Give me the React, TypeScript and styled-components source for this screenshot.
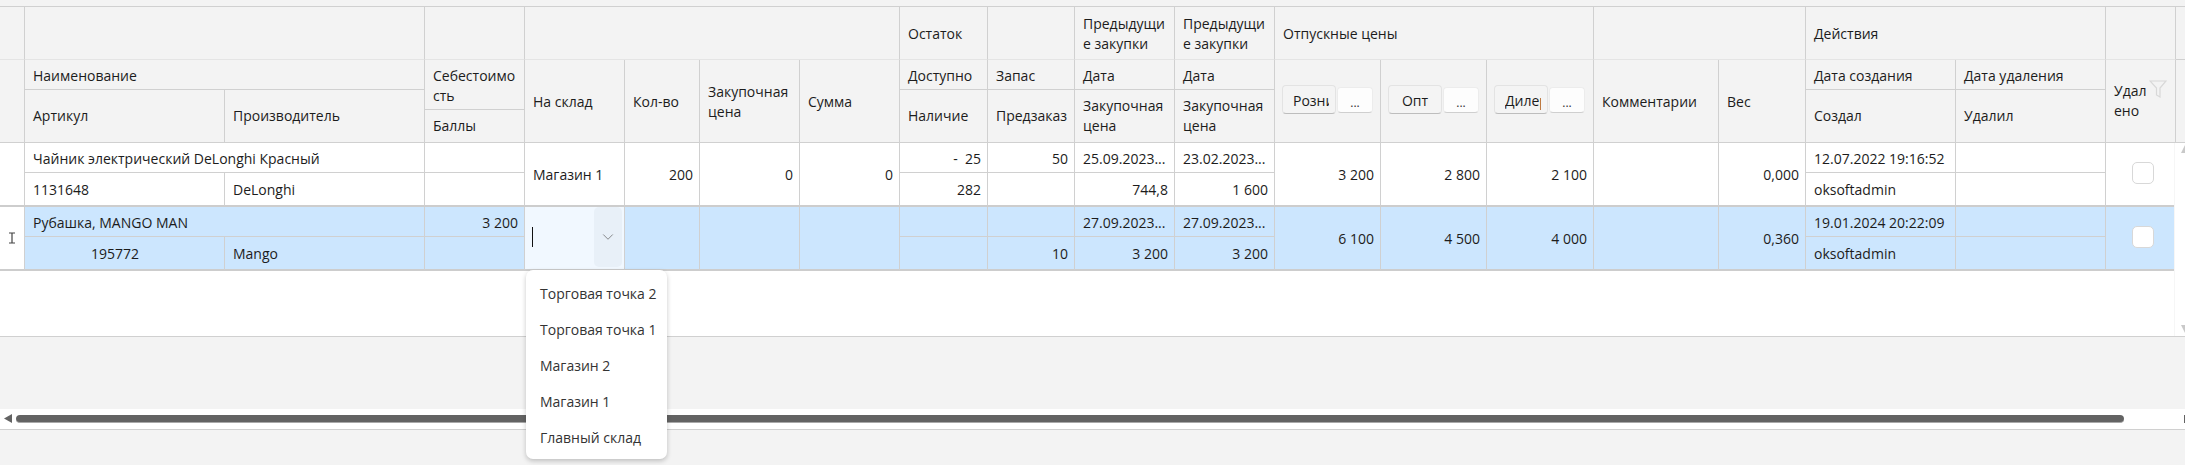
import styled, { createGlobalStyle, css } from 'styled-components'
import { ChevronDown } from 'lucide-react'

const GlobalStyle = createGlobalStyle`
  html, body {
    margin: 0;
    padding: 0;
    background: #f3f3f3;
  }
  * {
    box-sizing: border-box;
  }
`

const LINE = '#d0d0d0'
const TRACKS = '25px 200px 200px 100px 100px 75px 100px 100px 88px 87px 100px 100px 106px 106px 107px 125px 87px 150px 150px'

const Page = styled.div`
  width: 2185px;
  height: 465px;
  overflow: hidden;
  display: flex;
  flex-direction: column;
  background: #f3f3f3;
  font-family: "Open Sans", "Noto Sans", sans-serif;
  font-size: 14px;
  color: #1c1c1c;
`

const TopGap = styled.div`
  height: 7px;
  flex: none;
  border-bottom: 1px solid ${LINE};
`

const HeaderGrid = styled.div`
  flex: none;
  display: grid;
  grid-template-columns: ${TRACKS} 70px 9px;
  grid-template-rows: 53px 30px 20px 33px;
  height: 136px;
  background: #f3f3f3;
`

interface PlaceProps {
  $c: number
  $cs?: number
  $r: number
  $rs?: number
}

const place = css<PlaceProps>`
  grid-column: ${(p) => p.$c} / span ${(p) => p.$cs ?? 1};
  grid-row: ${(p) => p.$r} / span ${(p) => p.$rs ?? 1};
`

const HeadCell = styled.div<PlaceProps & { $soft?: boolean; $open?: boolean }>`
  ${place}
  display: flex;
  align-items: center;
  padding: ${(p) => (p.$r <= 2 ? '2px' : '0')} 7px 0 8px;
  line-height: 20px;
  overflow-wrap: anywhere;
  border-right: ${(p) => (p.$open ? 'none' : `1px solid ${LINE}`)};
  border-bottom: 1px solid ${(p) => (p.$soft ? '#e4e4e4' : LINE)};
`

const DeletedHead = styled(HeadCell)`
  position: relative;
  padding-top: 0;
  padding-right: 24px;
`

const FilterMark = styled.svg`
  position: absolute;
  top: 20px;
  right: 8px;
  width: 18px;
  height: 18px;
`

const PriceHead = styled(HeadCell)`
  align-items: flex-start;
  gap: 1px;
  padding: 25px 0 0 7px;
`

const PriceButton = styled.button`
  width: 54px;
  height: 29px;
  flex: none;
  padding: 3px 6px 0 10px;
  text-align: left;
  font: inherit;
  color: inherit;
  background: #f4f4f4;
  border: 1px solid #e3e3e3;
  border-bottom-color: #bdbdbd;
  border-radius: 4px;
`

const CenteredPriceButton = styled(PriceButton)`
  padding: 3px 0 0;
  text-align: center;
`

const ButtonLabel = styled.span`
  display: block;
  overflow: hidden;
  white-space: nowrap;
`

const DotsButton = styled.button`
  width: 36px;
  height: 26px;
  margin-top: 2px;
  flex: none;
  padding: 6px 0 0;
  font: inherit;
  font-size: 12px;
  line-height: 16px;
  color: #333;
  background: #fdfdfd;
  border: 1px solid #ececec;
  border-bottom-color: #cfcfcf;
  border-radius: 4px;
`

const Body = styled.div`
  flex: none;
  height: 194px;
  display: flex;
  background: #fff;
  border-bottom: 1px solid ${LINE};
`

const Rows = styled.div`
  width: 2174px;
  flex: none;
`

const VScroll = styled.div`
  flex: 1;
  display: flex;
  flex-direction: column;
  justify-content: space-between;
  padding: 2px 0 3px 6px;
  border-left: 1px solid #f6f6f6;
`

const Row = styled.div<{ $selected?: boolean }>`
  display: grid;
  grid-template-columns: ${TRACKS} 1fr;
  grid-template-rows: 30px 34px;
  height: 64px;
  background: ${(p) => (p.$selected ? '#cce6fe' : '#fff')};
`

const BodyCell = styled.div<PlaceProps & { $right?: boolean; $inner?: boolean; $open?: boolean; $indent?: number }>`
  ${place}
  display: flex;
  align-items: center;
  justify-content: ${(p) => (p.$right ? 'flex-end' : 'flex-start')};
  padding: 1px ${(p) => (p.$right ? '6px' : '7px')} 0 ${(p) => p.$indent ?? 8}px;
  white-space: pre;
  border-right: ${(p) => (p.$open ? 'none' : `1px solid ${LINE}`)};
  border-bottom: ${(p) => (p.$inner ? '1px' : '2px')} solid ${LINE};
  border-bottom-color: ${(p) => (p.$inner ? LINE : '#cdcdcd')};
`

const Indicator = styled(BodyCell)`
  justify-content: center;
  background: #fff;
  padding: 0;
`

const Editor = styled(BodyCell)`
  position: relative;
  overflow: visible;
  padding: 0 2px 2px 7px;
  background: #f1f8ff;
  z-index: 2;
`

const Caret = styled.span`
  width: 1px;
  height: 20px;
  background: #111;
`

const ChevronBox = styled.span`
  margin-left: auto;
  width: 28px;
  height: 60px;
  display: flex;
  align-items: center;
  justify-content: center;
  background: #e8f0f8;
  border-radius: 5px;
  color: #555;
`

const Dropdown = styled.ul`
  position: absolute;
  top: 63px;
  left: 1px;
  width: 141px;
  height: 189px;
  margin: 0;
  padding: 5px 0 0;
  list-style: none;
  background: #fff;
  border-radius: 7px;
  box-shadow: 0 2px 5px rgba(0, 0, 0, 0.22);
  color: #333;
  z-index: 5;
`

const DropdownItem = styled.li`
  height: 36px;
  padding-left: 14px;
  display: flex;
  align-items: center;
`

const CheckCell = styled(BodyCell)`
  justify-content: center;
  padding: 0 0 2px 6px;
`

const CheckBox = styled.span`
  width: 22px;
  height: 22px;
  background: #fff;
  border: 1px solid #d8d8d8;
  border-radius: 5px;
`

const GrayStrip = styled.div`
  flex: none;
  height: 72px;
`

const HScroll = styled.div`
  flex: none;
  height: 21px;
  display: flex;
  align-items: center;
  gap: 4px;
  padding: 0 0 1px 4px;
  background: #fff;
  border-bottom: 1px solid ${LINE};
`

const Thumb = styled.div`
  width: 2108px;
  height: 8px;
  background: #636363;
  border-bottom: 1px solid #a9a9a9;
  border-radius: 4px;
`

const RightArrow = styled.svg`
  margin-left: auto;
  width: 1px;
  height: 8px;
`

const Triangle = ({ points }: { points: string }) => (
  <svg width="8" height="8" viewBox="0 0 8 8">
    <polygon points={points} fill="#c9c9c9" />
  </svg>
)

const heads: Array<PlaceProps & { t?: string; soft?: boolean; open?: boolean }> = [
  { $c: 1, $r: 1, soft: true },
  { $c: 2, $cs: 2, $r: 1, soft: true },
  { $c: 4, $r: 1, soft: true },
  { $c: 5, $cs: 4, $r: 1, soft: true },
  { $c: 9, $r: 1, t: 'Остаток', soft: true },
  { $c: 10, $r: 1, soft: true },
  { $c: 11, $r: 1, t: 'Предыдущие закупки', soft: true },
  { $c: 12, $r: 1, t: 'Предыдущие закупки', soft: true },
  { $c: 13, $cs: 3, $r: 1, t: 'Отпускные цены', soft: true },
  { $c: 16, $cs: 2, $r: 1, soft: true },
  { $c: 18, $cs: 2, $r: 1, t: 'Действия', soft: true },
  { $c: 20, $r: 1, soft: true },
  { $c: 21, $r: 1, open: true },
  { $c: 1, $r: 2, $rs: 3 },
  { $c: 2, $cs: 2, $r: 2, t: 'Наименование' },
  { $c: 2, $r: 3, $rs: 2, t: 'Артикул' },
  { $c: 3, $r: 3, $rs: 2, t: 'Производитель' },
  { $c: 4, $r: 2, $rs: 2, t: 'Себестоимость' },
  { $c: 4, $r: 4, t: 'Баллы' },
  { $c: 5, $r: 2, $rs: 3, t: 'На склад' },
  { $c: 6, $r: 2, $rs: 3, t: 'Кол-во' },
  { $c: 7, $r: 2, $rs: 3, t: 'Закупочная цена' },
  { $c: 8, $r: 2, $rs: 3, t: 'Сумма' },
  { $c: 9, $r: 2, t: 'Доступно' },
  { $c: 9, $r: 3, $rs: 2, t: 'Наличие' },
  { $c: 10, $r: 2, t: 'Запас' },
  { $c: 10, $r: 3, $rs: 2, t: 'Предзаказ' },
  { $c: 11, $r: 2, t: 'Дата' },
  { $c: 11, $r: 3, $rs: 2, t: 'Закупочная цена' },
  { $c: 12, $r: 2, t: 'Дата' },
  { $c: 12, $r: 3, $rs: 2, t: 'Закупочная цена' },
  { $c: 16, $r: 2, $rs: 3, t: 'Комментарии' },
  { $c: 17, $r: 2, $rs: 3, t: 'Вес' },
  { $c: 18, $r: 2, t: 'Дата создания' },
  { $c: 18, $r: 3, $rs: 2, t: 'Создал' },
  { $c: 19, $r: 2, t: 'Дата удаления' },
  { $c: 19, $r: 3, $rs: 2, t: 'Удалил' },
  { $c: 21, $r: 2, $rs: 3, open: true },
]

const warehouses = ['Торговая точка 2', 'Торговая точка 1', 'Магазин 2', 'Магазин 1', 'Главный склад']

interface RowData {
  name: string
  cost?: string
  qty?: string
  price?: string
  sum?: string
  avail?: string
  reserve?: string
  date1: string
  date2: string
  retail: string
  wholesale: string
  dealer: string
  weight: string
  created: string
  sku: string
  skuIndent?: number
  maker: string
  stock?: string
  preorder?: string
  price1: string
  price2: string
}

const rowOne: RowData = {
  name: 'Чайник электрический DeLonghi Красный',
  qty: '200',
  price: '0',
  sum: '0',
  avail: '-  25',
  reserve: '50',
  date1: '25.09.2023...',
  date2: '23.02.2023...',
  retail: '3 200',
  wholesale: '2 800',
  dealer: '2 100',
  weight: '0,000',
  created: '12.07.2022 19:16:52',
  sku: '1131648',
  maker: 'DeLonghi',
  stock: '282',
  price1: '744,8',
  price2: '1 600',
}

const rowTwo: RowData = {
  name: 'Рубашка, MANGO MAN',
  cost: '3 200',
  date1: '27.09.2023...',
  date2: '27.09.2023...',
  retail: '6 100',
  wholesale: '4 500',
  dealer: '4 000',
  weight: '0,360',
  created: '19.01.2024 20:22:09',
  sku: '195772',
  skuIndent: 66,
  maker: 'Mango',
  preorder: '10',
  price1: '3 200',
  price2: '3 200',
}

const TableRow = ({ data, selected }: { data: RowData; selected?: boolean }) => (
  <Row $selected={selected}>
    <Indicator $c={1} $r={1} $rs={2}>
      {selected && (
        <svg width="8" height="12" viewBox="0 0 8 12" fill="none" stroke="#444" strokeWidth="1.2">
          <path d="M1 1h6M1 11h6M4 1v10" />
        </svg>
      )}
    </Indicator>
    <BodyCell $c={2} $cs={2} $r={1} $inner>{data.name}</BodyCell>
    <BodyCell $c={4} $r={1} $inner $right>{data.cost}</BodyCell>
    {selected ? (
      <Editor $c={5} $r={1} $rs={2}>
        <Caret />
        <ChevronBox>
          <ChevronDown size={18} strokeWidth={0.9} />
        </ChevronBox>
        <Dropdown>
          {warehouses.map((w) => (
            <DropdownItem key={w}>{w}</DropdownItem>
          ))}
        </Dropdown>
      </Editor>
    ) : (
      <BodyCell $c={5} $r={1} $rs={2}>Магазин 1</BodyCell>
    )}
    <BodyCell $c={6} $r={1} $rs={2} $right>{data.qty}</BodyCell>
    <BodyCell $c={7} $r={1} $rs={2} $right>{data.price}</BodyCell>
    <BodyCell $c={8} $r={1} $rs={2} $right>{data.sum}</BodyCell>
    <BodyCell $c={9} $r={1} $inner $right>{data.avail}</BodyCell>
    <BodyCell $c={10} $r={1} $inner $right>{data.reserve}</BodyCell>
    <BodyCell $c={11} $r={1} $inner>{data.date1}</BodyCell>
    <BodyCell $c={12} $r={1} $inner>{data.date2}</BodyCell>
    <BodyCell $c={13} $r={1} $rs={2} $right>{data.retail}</BodyCell>
    <BodyCell $c={14} $r={1} $rs={2} $right>{data.wholesale}</BodyCell>
    <BodyCell $c={15} $r={1} $rs={2} $right>{data.dealer}</BodyCell>
    <BodyCell $c={16} $r={1} $rs={2} />
    <BodyCell $c={17} $r={1} $rs={2} $right>{data.weight}</BodyCell>
    <BodyCell $c={18} $r={1} $inner>{data.created}</BodyCell>
    <BodyCell $c={19} $r={1} $inner />
    <CheckCell $c={20} $r={1} $rs={2} $open>
      <CheckBox />
    </CheckCell>
    <BodyCell $c={2} $r={2} $indent={data.skuIndent}>{data.sku}</BodyCell>
    <BodyCell $c={3} $r={2}>{data.maker}</BodyCell>
    <BodyCell $c={4} $r={2} />
    <BodyCell $c={9} $r={2} $right>{data.stock}</BodyCell>
    <BodyCell $c={10} $r={2} $right>{data.preorder}</BodyCell>
    <BodyCell $c={11} $r={2} $right>{data.price1}</BodyCell>
    <BodyCell $c={12} $r={2} $right>{data.price2}</BodyCell>
    <BodyCell $c={18} $r={2}>oksoftadmin</BodyCell>
    <BodyCell $c={19} $r={2} />
  </Row>
)

export default function App() {
  return (
    <>
      <GlobalStyle />
      <Page>
        <TopGap />
        <HeaderGrid>
          {heads.map(({ t, soft, open, ...pos }) => (
            <HeadCell key={`${pos.$c}-${pos.$r}`} {...pos} $soft={soft} $open={open}>
              {t}
            </HeadCell>
          ))}
          <PriceHead $c={13} $r={2} $rs={3}>
            <PriceButton><ButtonLabel>Розница</ButtonLabel></PriceButton>
            <DotsButton>...</DotsButton>
          </PriceHead>
          <PriceHead $c={14} $r={2} $rs={3}>
            <CenteredPriceButton><ButtonLabel>Опт</ButtonLabel></CenteredPriceButton>
            <DotsButton>...</DotsButton>
          </PriceHead>
          <PriceHead $c={15} $r={2} $rs={3}>
            <PriceButton><ButtonLabel>Дилер</ButtonLabel></PriceButton>
            <DotsButton>...</DotsButton>
          </PriceHead>
          <DeletedHead $c={20} $r={2} $rs={3}>
            Удалено
            <FilterMark viewBox="0 0 18 18" fill="none" stroke="#d8d8d8" strokeWidth="1.2">
              <path d="M1 1h16l-6 7v9l-3.5-2V8z" />
            </FilterMark>
          </DeletedHead>
        </HeaderGrid>
        <Body>
          <Rows>
            <TableRow data={rowOne} />
            <TableRow data={rowTwo} selected />
          </Rows>
          <VScroll>
            <Triangle points="4,0 8,8 0,8" />
            <Triangle points="0,0 8,0 4,8" />
          </VScroll>
        </Body>
        <GrayStrip />
        <HScroll>
          <svg width="8" height="9" viewBox="0 0 8 9">
            <polygon points="8,0 8,9 0,4.5" fill="#636363" />
          </svg>
          <Thumb />
          <RightArrow viewBox="0 0 1 8">
            <rect width="1" height="8" fill="#636363" />
          </RightArrow>
        </HScroll>
      </Page>
    </>
  )
}
